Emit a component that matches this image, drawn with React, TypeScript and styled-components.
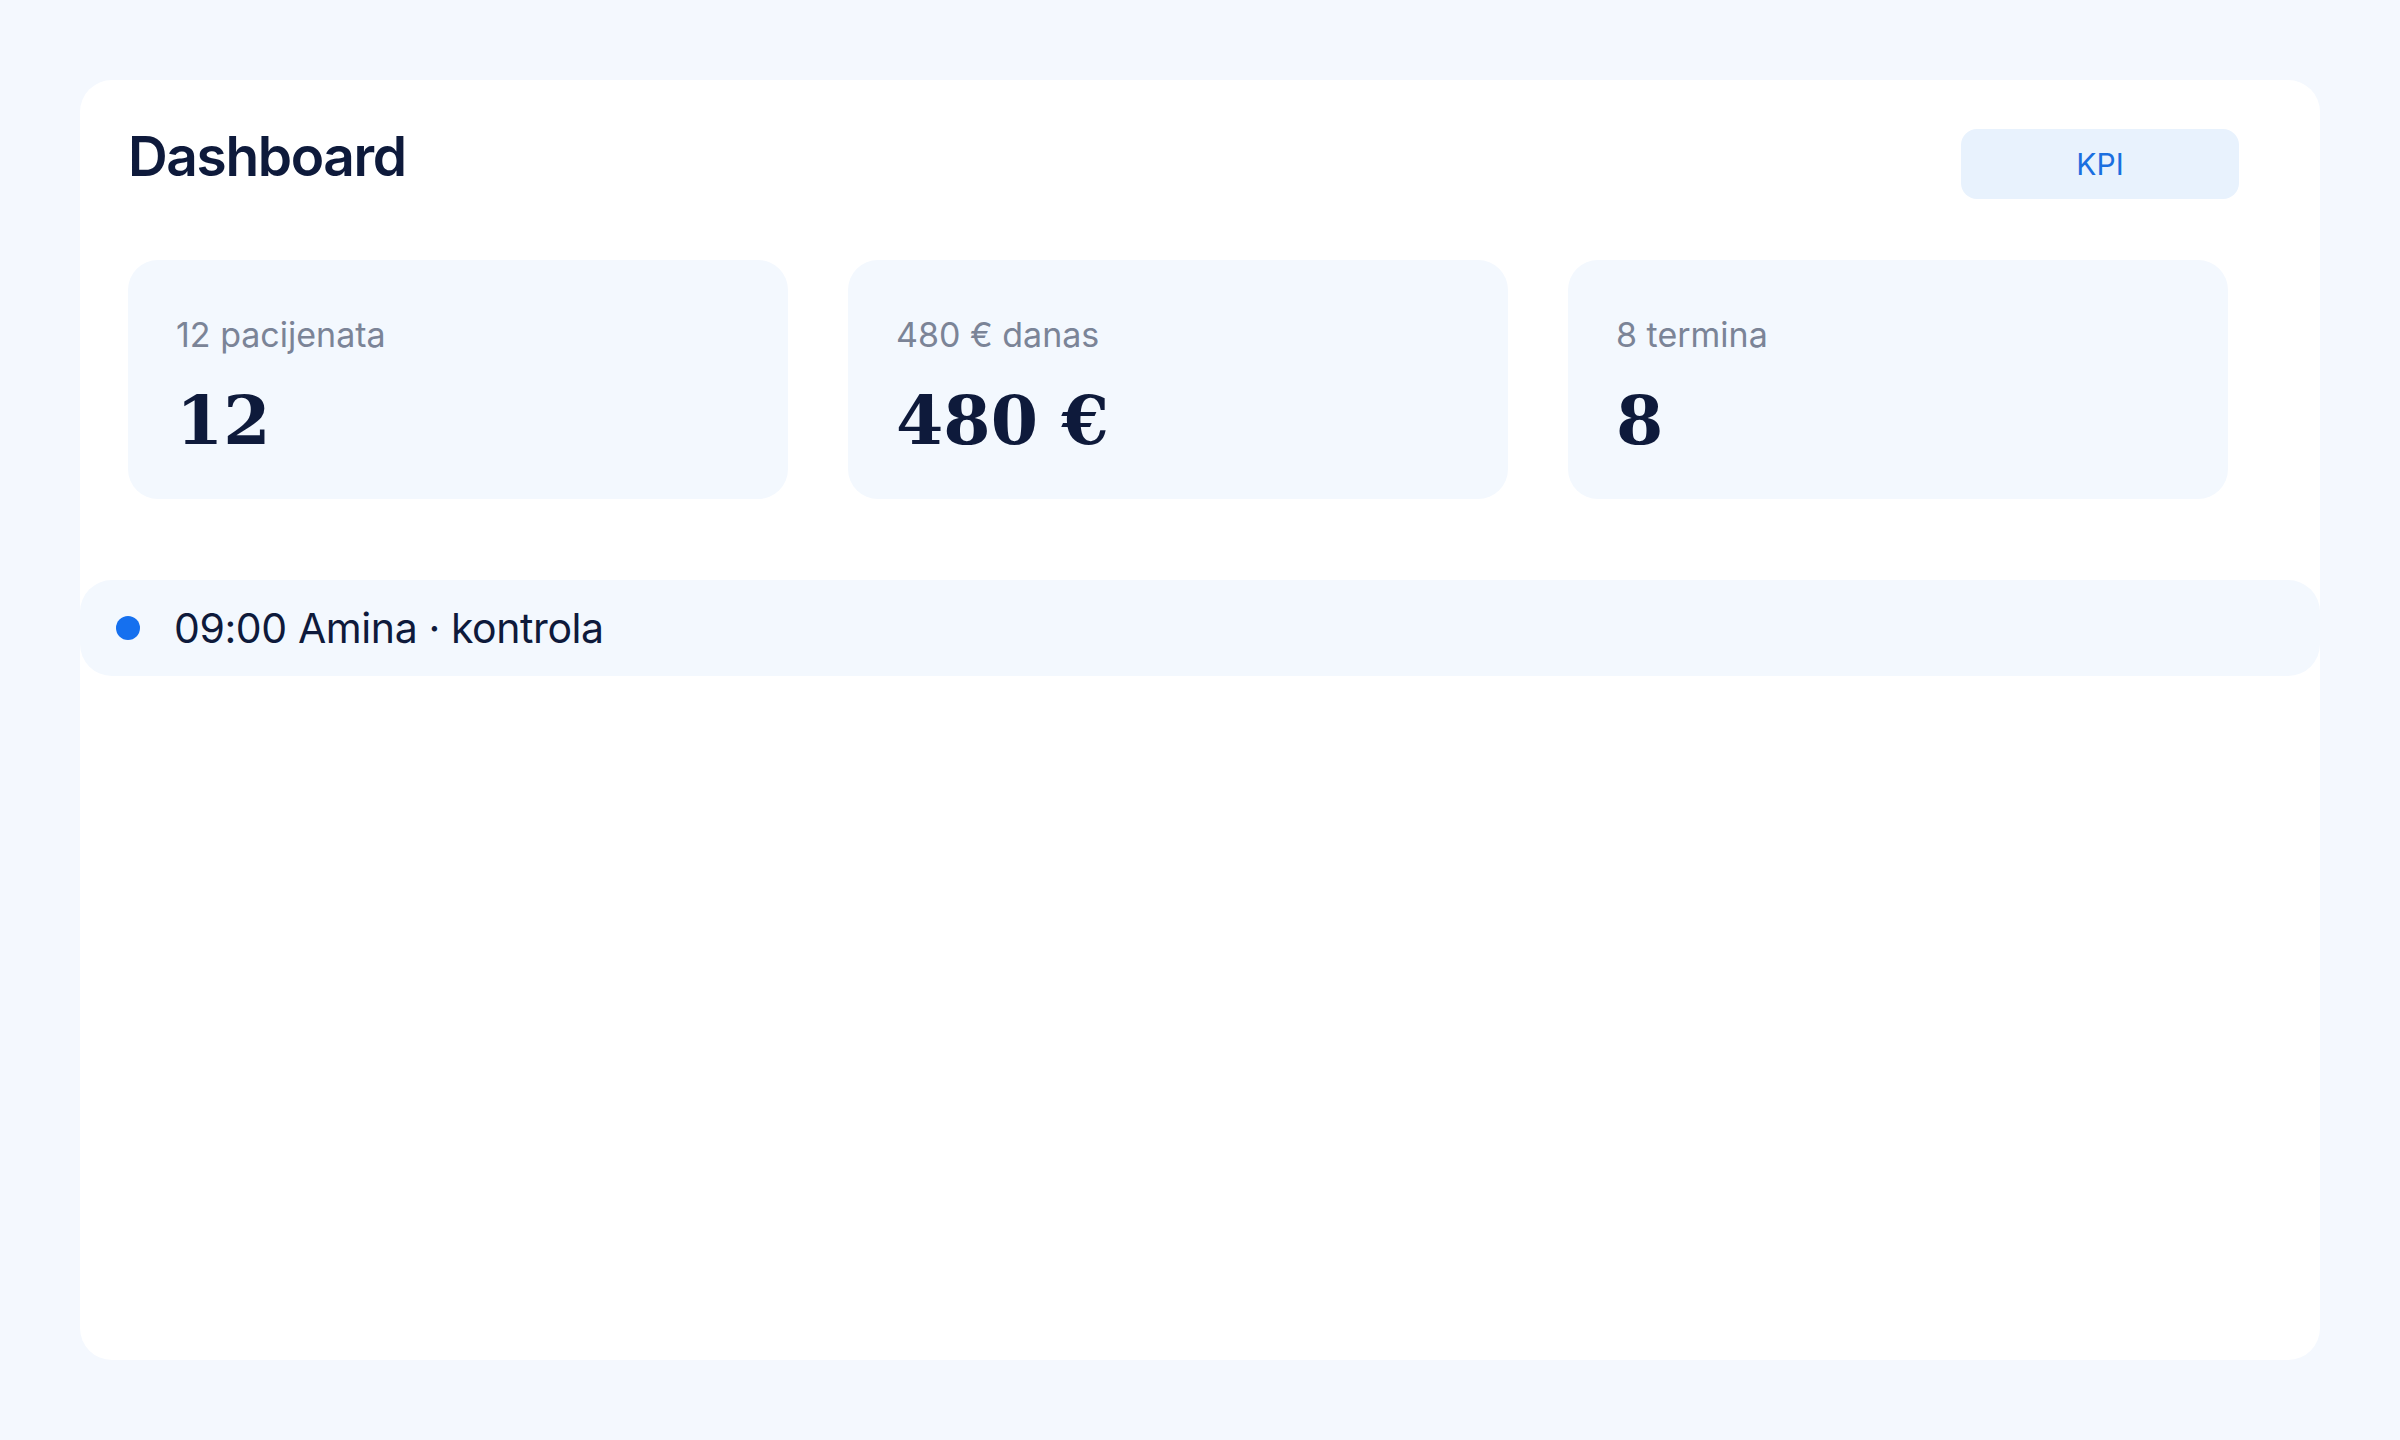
import React from 'react';
import styled, {createGlobalStyle} from 'styled-components';

// 오늘 요약 수치
const stats = [
    {id: 'patients', label: '12 pacijenata', value: '12'},
    {id: 'revenue', label: '480 € danas', value: '480 €'},
    {id: 'slots', label: '8 termina', value: '8'}
];

// 오늘 일정
const appointments = [
    {id: 1, time: '09:00', name: 'Amina', type: 'kontrola'}
];

const App: React.FC = () => {
    return (
        <>
            <GlobalStyle/>
            <Page>
                <Card>
                    <Header>
                        <Title>Dashboard</Title>
                        <KpiButton>KPI</KpiButton>
                    </Header>

                    <StatsGrid>
                        {
                            stats.map((stat) => (
                                <StatCard key={stat.id}>
                                    <StatLabel>{stat.label}</StatLabel>
                                    <StatValue>{stat.value}</StatValue>
                                </StatCard>
                            ))
                        }
                    </StatsGrid>

                    {/* 일정 리스트 */}
                    <AppointmentList>
                        {
                            appointments.map((item) => (
                                <AppointmentRow key={item.id}>
                                    <Dot/>
                                    <AppointmentText>
                                        {item.time} {item.name} · {item.type}
                                    </AppointmentText>
                                </AppointmentRow>
                            ))
                        }
                    </AppointmentList>
                </Card>
            </Page>
        </>
    );
};

export default App;

// styled-components

const GlobalStyle = createGlobalStyle `
  html, body {
    margin: 0;
    padding: 0;
    background: #f4f8fe;
  }
  * {
    box-sizing: border-box;
  }
`;

const Page = styled.div `
  width: 2400px;
  height: 1440px;
  padding: 80px;
  font-family: Inter, "Noto Sans", "Liberation Sans", sans-serif;
  background: #f4f8fe;
`;

const Card = styled.div `
  height: 1280px;
  background: #fff;
  border-radius: 32px;
  padding: 43px 48px;
`;

const Header = styled.div `
  display: flex;
  justify-content: space-between;
  align-items: flex-start;
  height: 137px;
  padding-right: 33px;
`;

const Title = styled.h1 `
  margin: 0;
  font-size: 55px;
  line-height: 67px;
  font-weight: 600;
  letter-spacing: -0.025em;
  color: #0e1a3b;
`;

const KpiButton = styled.button `
  margin-top: 6px;
  width: 278px;
  height: 70px;
  border: none;
  border-radius: 16px;
  background: #e8f2fd;
  color: #1a6fe0;
  font-family: inherit;
  font-size: 30px;
  font-weight: 400;
  cursor: pointer;
`;

const StatsGrid = styled.div `
  display: grid;
  grid-template-columns: repeat(3, 660px);
  gap: 60px;
`;

const StatCard = styled.div `
  height: 239px;
  background: #f3f8fe;
  border-radius: 30px;
  padding: 54px 48px 42px;
  display: flex;
  flex-direction: column;
  gap: 28px;
`;

const StatLabel = styled.span `
  font-size: 34px;
  line-height: 41px;
  color: #7b8497;
`;

const StatValue = styled.span `
  font-family: Georgia, "DejaVu Serif", serif;
  font-size: 68px;
  line-height: 75px;
  font-weight: 700;
  color: #0e1a3b;
`;

const AppointmentList = styled.div `
  margin: 81px -48px 0;
  display: flex;
  flex-direction: column;
  gap: 16px;
`;

const AppointmentRow = styled.div `
  display: flex;
  align-items: center;
  gap: 34px;
  height: 96px;
  padding: 0 36px;
  background: #f3f8fe;
  border-radius: 32px;
`;

const Dot = styled.span `
  width: 24px;
  height: 24px;
  border-radius: 50%;
  background: #1570ef;
  flex-shrink: 0;
`;

const AppointmentText = styled.span `
  font-size: 41px;
  line-height: 48px;
  letter-spacing: -0.01em;
  color: #0e1a3b;
`;
